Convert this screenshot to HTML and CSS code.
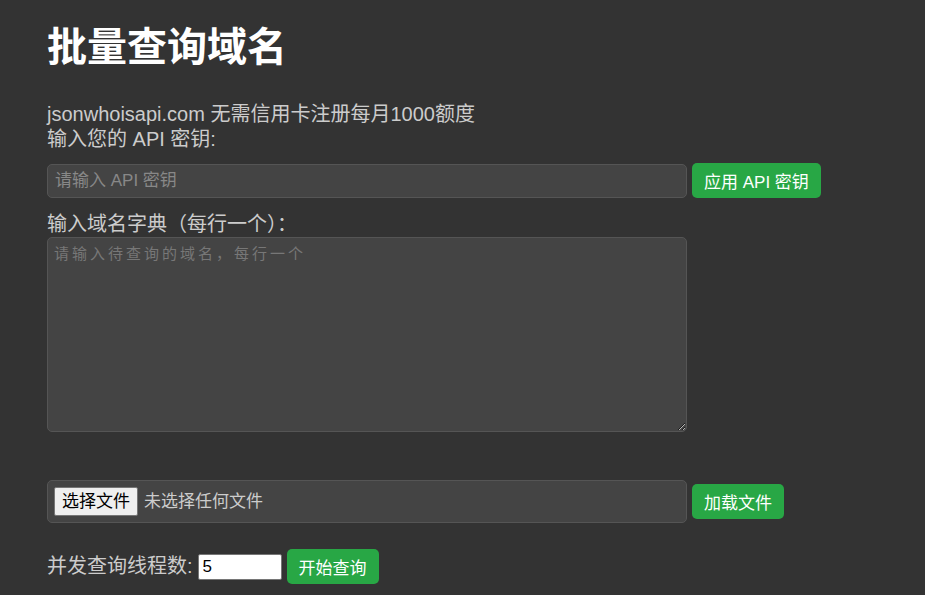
FILE: index.html
```html
<!DOCTYPE html>
<html>
<head>
  <meta charset="utf-8">
  <title>批量查询域名</title>
  <link rel="stylesheet" href="styles.css">
</head>
<body>
  <div class="container">
    <h1>批量查询域名</h1>

    <div class="intro">jsonwhoisapi.com 无需信用卡注册每月1000额度</div>
    <label class="field-label" for="apiKey">输入您的 API 密钥:</label>
    <div class="row api-row">
      <input type="text" id="apiKey" class="text-input" placeholder="请输入 API 密钥" />
      <button class="btn">应用 API 密钥</button>
    </div>

    <label class="field-label" for="domains">输入域名字典（每行一个）：</label>
    <textarea id="domains" class="domain-list" placeholder="请输入待查询的域名，每行一个"></textarea>

    <div class="row file-row">
      <div class="file-box">
        <label class="file-btn" for="fileInput">选择文件</label>
        <span class="file-name">未选择任何文件</span>
        <input type="file" id="fileInput" class="file-hidden" />
      </div>
      <button class="btn">加载文件</button>
    </div>

    <div class="row thread-row">
      <label for="threads">并发查询线程数:</label>
      <input type="number" id="threads" class="num-input" value="5" min="1" />
      <button class="btn">开始查询</button>
    </div>
  </div>
</body>
</html>
```

FILE: styles.css
```css
body {
  margin: 0;
  background-color: #333;
  color: #ccc;
  font-family: "Liberation Sans", Arial, "Noto Sans CJK SC", sans-serif;
  font-size: 20px;
  line-height: 25px;
}
.container {
  padding: 0 47px;
}
h1 {
  margin: 23px 0 31px;
  color: #fff;
  font-size: 40px;
  line-height: 48px;
  font-weight: bold;
}
.intro, .field-label {
  display: block;
}
.row {
  display: flex;
  align-items: center;
  gap: 5px;
}
.api-row {
  margin-top: 11px;
  margin-bottom: 14px;
}
.text-input {
  box-sizing: border-box;
  width: 640px;
  height: 34px;
  padding: 0 7px;
  background: #444;
  border: 1px solid #555;
  border-radius: 5px;
  color: #ddd;
  font-family: inherit;
  font-size: 17px;
  outline: none;
}
.text-input::placeholder {
  color: #888;
}
.btn {
  height: 35px;
  padding: 0 12px;
  background: #28a745;
  color: #fff;
  border: none;
  border-radius: 5px;
  font-family: inherit;
  font-size: 17px;
  cursor: pointer;
}
.btn:hover {
  background: #218838;
}
.domain-list {
  display: block;
  box-sizing: border-box;
  width: 640px;
  height: 195px;
  margin: 0;
  padding: 4px 6px;
  background: #444;
  border: 1px solid #555;
  border-radius: 5px;
  color: #ddd;
  font-family: "Noto Sans CJK SC", monospace;
  font-size: 15px;
  letter-spacing: 3px;
  line-height: 22px;
  outline: none;
}
.domain-list::placeholder {
  color: #777;
}
.file-row {
  margin-top: 48px;
}
.file-box {
  box-sizing: border-box;
  width: 640px;
  height: 43px;
  display: flex;
  align-items: center;
  gap: 6px;
  padding: 0 6px;
  background: #444;
  border: 1px solid #555;
  border-radius: 5px;
  font-size: 17px;
}
.file-btn {
  box-sizing: border-box;
  height: 29px;
  padding: 0 7px;
  display: flex;
  align-items: center;
  background: #efefef;
  border: 1px solid #767676;
  border-radius: 2px;
  color: #000;
  cursor: pointer;
}
.file-name {
  color: #ccc;
}
.file-hidden {
  display: none;
}
.thread-row {
  margin-top: 26px;
}
.num-input {
  box-sizing: border-box;
  width: 84px;
  height: 26px;
  padding: 0 4px;
  background: #fff;
  border: 1px solid #767676;
  border-radius: 2px;
  color: #000;
  font-family: inherit;
  font-size: 17px;
}
```
